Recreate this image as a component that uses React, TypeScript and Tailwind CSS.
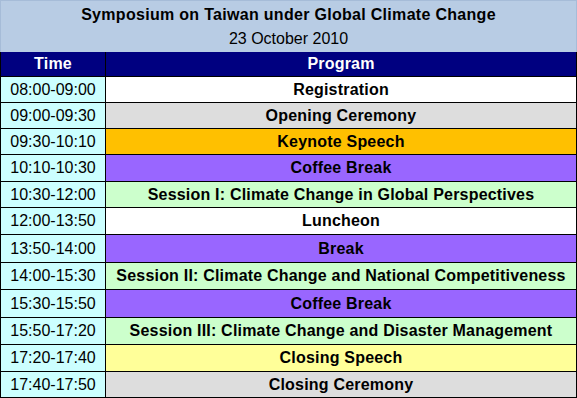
import React from "react";

type Row = { time: string; program: string; bg: string; h: string };

const rows: Row[] = [
  { time: "08:00-09:00", program: "Registration", bg: "bg-white", h: "h-[26px]" },
  { time: "09:00-09:30", program: "Opening Ceremony", bg: "bg-[#dddddd]", h: "h-[26px]" },
  { time: "09:30-10:10", program: "Keynote Speech", bg: "bg-[#ffc000]", h: "h-[26px]" },
  { time: "10:10-10:30", program: "Coffee Break", bg: "bg-[#9966ff]", h: "h-[27px]" },
  { time: "10:30-12:00", program: "Session I: Climate Change in Global Perspectives", bg: "bg-[#ccffcc]", h: "h-[26px]" },
  { time: "12:00-13:50", program: "Luncheon", bg: "bg-white", h: "h-[27px]" },
  { time: "13:50-14:00", program: "Break", bg: "bg-[#9966ff]", h: "h-[28px]" },
  { time: "14:00-15:30", program: "Session II: Climate Change and National Competitiveness", bg: "bg-[#ccffcc]", h: "h-[27px]" },
  { time: "15:30-15:50", program: "Coffee Break", bg: "bg-[#9966ff]", h: "h-[28px]" },
  { time: "15:50-17:20", program: "Session III: Climate Change and Disaster Management", bg: "bg-[#ccffcc]", h: "h-[27px]" },
  { time: "17:20-17:40", program: "Closing Speech", bg: "bg-[#ffff99]", h: "h-[27px]" },
  { time: "17:40-17:50", program: "Closing Ceremony", bg: "bg-[#dddddd]", h: "h-[26px]" },
];

export default function App() {
  return (
    <div
      className="w-[577px] h-[398px] bg-white text-black overflow-hidden"
      style={{ fontFamily: '"Liberation Sans", Arial, sans-serif' }}
    >
      <div className="h-[52px] bg-[#b8cce4] border border-b-0 border-[#a6bcd8] flex flex-col items-center justify-center">
        <div className="text-[16px] leading-[24px] font-bold tracking-[0.3px]">Symposium on Taiwan under Global Climate Change</div>
        <div className="text-[16px] leading-[24px]">23 October 2010</div>
      </div>
      <div className="border-l border-r border-black">
        <div className="grid grid-cols-[105px_1fr] h-[25px] border-b border-black bg-[#000080] text-white font-bold text-[16px] tracking-[0.2px]">
          <div className="flex items-center justify-center border-r border-black">Time</div>
          <div className="flex items-center justify-center">Program</div>
        </div>
        {rows.map((r, i) => (
          <div key={i} className={`grid grid-cols-[105px_1fr] ${r.h} border-b border-black`}>
            <div className="flex items-center justify-center border-r border-black bg-[#ccffff] text-[16px]">
              {r.time}
            </div>
            <div className={`flex items-center justify-center ${r.bg} font-bold text-[16px] tracking-[0.2px]`}>
              {r.program}
            </div>
          </div>
        ))}
      </div>
    </div>
  );
}
